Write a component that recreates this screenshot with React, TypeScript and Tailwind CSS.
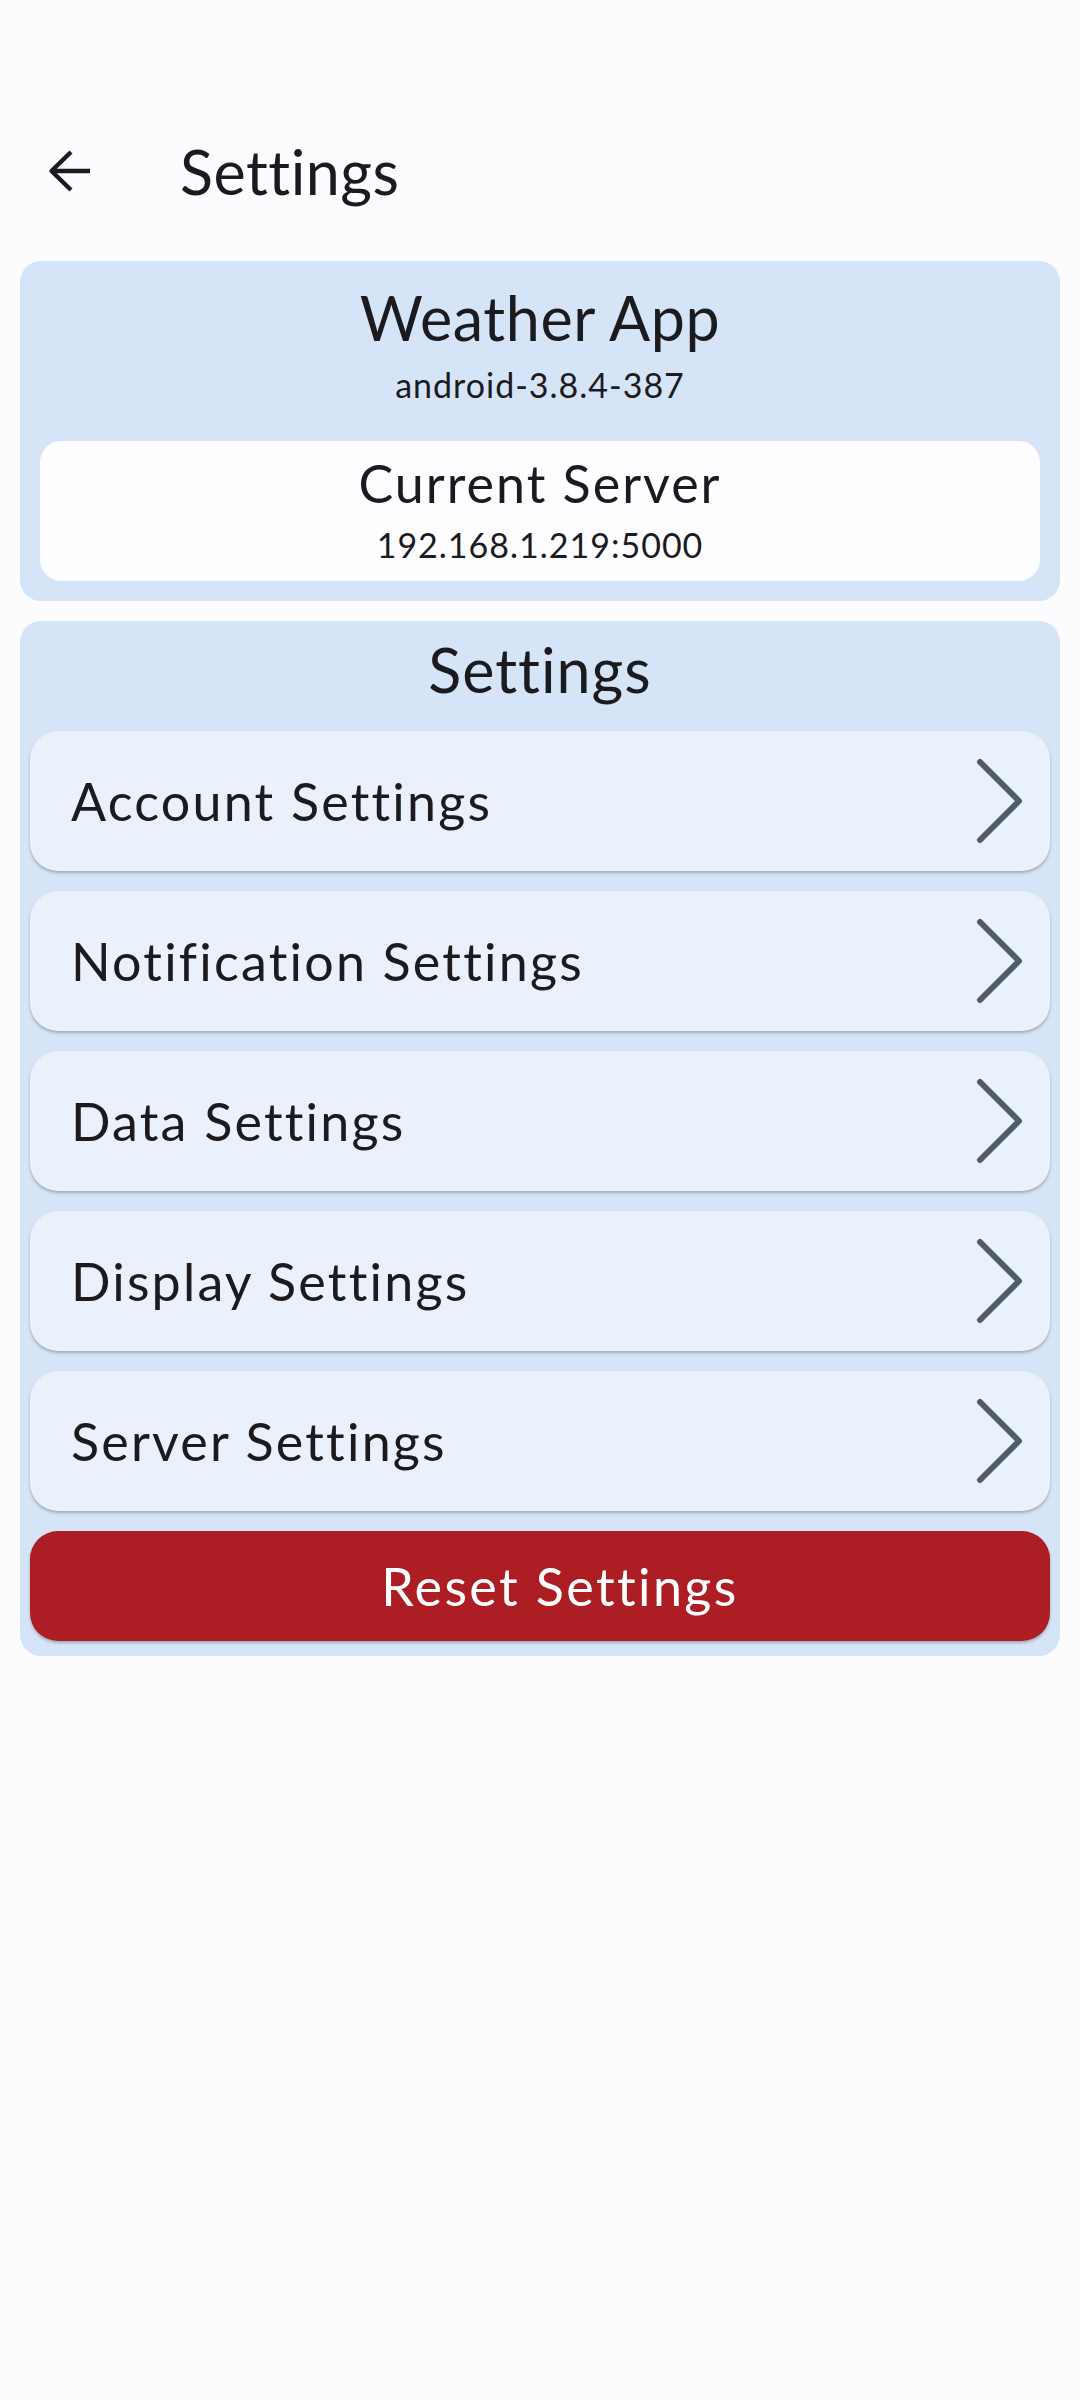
import React from 'react';

const ITEMS = ['Account Settings', 'Notification Settings', 'Data Settings', 'Display Settings', 'Server Settings'];

function BackArrow() {
  return (
    <svg width="44" height="44" viewBox="0 0 44 44" fill="none" stroke="#1b1b1f" strokeWidth="4.4" strokeLinejoin="round">
      <path d="M42 22H3" />
      <path d="M23 3L3.5 22L23 41" />
    </svg>
  );
}

function Chevron() {
  return (
    <svg width="50" height="90" viewBox="0 0 50 90" fill="none" stroke="#4e5d6d" strokeWidth="6" strokeLinecap="round" strokeLinejoin="round">
      <path d="M5 6L44 45L5 84" />
    </svg>
  );
}

export default function App() {
  return (
    <div className="min-h-screen w-full bg-[#fcfcff] font-['Lato','Noto_Sans',sans-serif] text-[#1b1b1f]">
      {/* Toolbar */}
      <div className="pt-[87px]">
        <div className="h-[168px] flex items-center">
          <div className="ml-[48px] w-[44px] h-[44px]">
            <BackArrow />
          </div>
          <h1 className="ml-[88px] text-[61px] leading-none tracking-[0.5px]">Settings</h1>
        </div>
      </div>

      {/* App info */}
      <div className="mx-[20px] mt-[6px] rounded-[21px] bg-[#d6e4f7] px-[20px] pt-[26px] pb-[20px]">
        <div className="h-[61px] text-center text-[61px] leading-none tracking-[0.6px]">Weather App</div>
        <div className="mt-[20px] h-[34px] text-center text-[34px] leading-none tracking-[1px]">android-3.8.4-387</div>
        <div className="mt-[39px] h-[140px] rounded-[21px] bg-[#fdfdff] pt-[16px]">
          <div className="h-[52px] text-center text-[52px] leading-none tracking-[2px]">Current Server</div>
          <div className="mt-[19px] h-[34px] text-center text-[34px] leading-none tracking-[1px]">192.168.1.219:5000</div>
        </div>
      </div>

      {/* Settings list */}
      <div className="mx-[20px] mt-[20px] rounded-[21px] bg-[#d6e4f7] px-[10px] pt-[18px] pb-[15px]">
        <div className="h-[61px] text-center text-[61px] leading-none tracking-[1px]">Settings</div>
        <div className="mt-[31px] flex flex-col gap-[20px]">
          {ITEMS.map(item => (
            <div
              key={item}
              className="h-[140px] rounded-[28px] bg-[#eaf1fa] shadow-[0_2px_3px_rgba(0,0,0,0.25)] flex items-center justify-between pl-[41px] pr-[25px]"
            >
              <span className="text-[52px] leading-none tracking-[2.2px]">{item}</span>
              <Chevron />
            </div>
          ))}
        </div>
        <button className="mt-[20px] w-full h-[110px] rounded-[28px] bg-[#ad1e24] shadow-[0_2px_3px_rgba(0,0,0,0.25)] flex items-center justify-center pl-[40px] text-white text-[52px] leading-none tracking-[2.4px]">
          Reset Settings
        </button>
      </div>
    </div>
  );
}
